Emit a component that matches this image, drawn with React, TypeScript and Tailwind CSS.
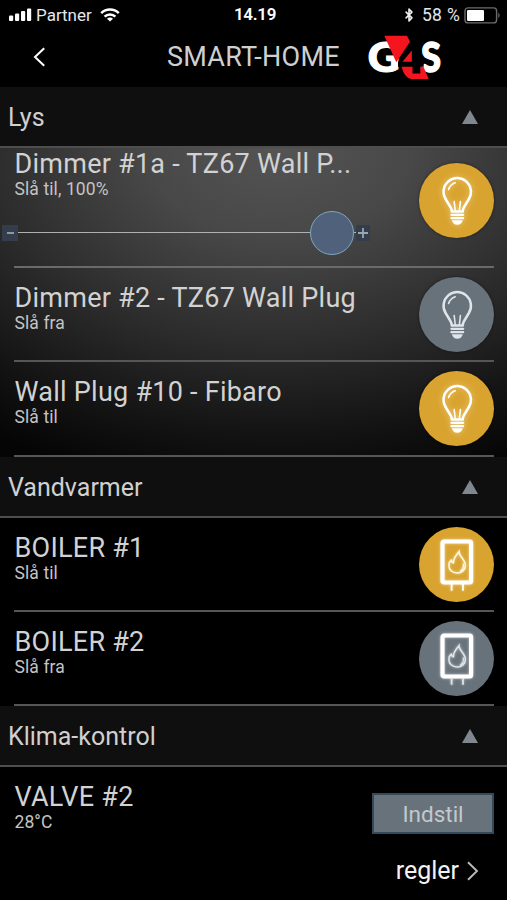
import { Bluetooth } from 'lucide-react';
import clsx from 'clsx';
import type { ReactNode } from 'react';

interface DeviceRowProps {
  name: string;
  status: string;
  className?: string;
  children?: ReactNode;
}

const StatusBar = () => (
  <div className="flex h-[30px] items-center px-[8px] text-[17px] text-gray-200">
    <div className="flex flex-1 items-center">
      <svg width="24" height="14" viewBox="0 0 24 14" fill="#fff">
        <rect x="1" y="7.5" width="4.2" height="5.5" rx="1" />
        <rect x="7" y="5.5" width="4.2" height="7.5" rx="1" />
        <rect x="13" y="3" width="4.2" height="10" rx="1" />
        <rect x="19" y="0.5" width="4.2" height="12.5" rx="1" />
      </svg>
      <span className="ml-[4px] pt-[1px]">Partner</span>
      <svg className="ml-[8px]" width="20" height="14" viewBox="0 0 20 14" fill="none" stroke="#fff" strokeWidth="2.5">
        <path d="M1.2 5.2a12.4 12.4 0 0 1 17.6 0" />
        <path d="M4.6 8.7a7.6 7.6 0 0 1 10.8 0" />
        <path d="M10 13.6 7 10.8a4.2 4.2 0 0 1 6 0z" fill="#fff" stroke="none" />
      </svg>
    </div>
    <span className="pl-[3px] font-semibold tracking-[-0.3px] text-white">14.19</span>
    <div className="flex flex-1 items-center justify-end">
      <Bluetooth className="h-[18px] w-[14px]" strokeWidth={2.8} color="#eee" />
      <span className="ml-[6px] pt-[1px] text-[17.5px] tracking-[0.3px]">58 %</span>
      <svg className="-mr-[3px] ml-[4px]" width="38" height="17" viewBox="0 0 38 17">
        <rect x="1" y="0.9" width="31.6" height="15" rx="3" fill="none" stroke="#6c6c6c" strokeWidth="1.4" />
        <rect x="3" y="2.9" width="17" height="11" rx="1.2" fill="#fff" />
        <path d="M34.4 5.6q2.4 2.8 0 5.6z" fill="#777" />
      </svg>
    </div>
  </div>
);

const Logo = () => (
  <svg
    className="overflow-visible"
    width="76"
    height="46"
    viewBox="0 0 76 46"
    fontFamily="Lato, sans-serif"
    fontWeight="900"
  >
    <text x="2.8" y="37.4" fontSize="41" fill="#fff" stroke="#fff" strokeWidth="1.2" textLength="32" lengthAdjust="spacingAndGlyphs">
      G
    </text>
    <text x="56" y="37.4" fontSize="41" fill="#fff" stroke="#fff" strokeWidth="1.4" textLength="20" lengthAdjust="spacingAndGlyphs">
      S
    </text>
    {/* dark gap between the white letters, then the red band around it */}
    <path d="M33 31.7V27L47.5 6.7H55.3V26.7H58.7V31.7Z" fill="#000" />
    <path d="M19.3 0.7H42L45 6.7L31.3 27.3Z" fill="#f5151f" />
    <path d="M46.8 15.5V26.7H37.5Z" fill="#f5151f" />
    <path d="M36.5 31.7H47.5V38.5H55.3V31.7H58.5L63.7 44H46Q39.5 43 36.5 31.7Z" fill="#f5151f" />
  </svg>
);

const Bulb = ({ on }: { on: boolean }) => (
  <svg
    className={clsx('h-[50px] w-[34px]', on && 'drop-shadow-[0_0_3px_rgba(255,240,190,0.6)]')}
    viewBox="0 0 34 50"
    fill="none"
    stroke={on ? '#fff' : '#dfe4e8'}
    strokeWidth="2.5"
    strokeLinecap="round"
    strokeLinejoin="round"
  >
    <path d="M11.7 35.4Q11.7 33 10.4 31L5.6 23A13.7 13.7 0 1 1 28.9 23L24.1 31Q22.8 33 22.8 35.4Z" />
    <path d="M8.6 13.4q1.8-5 6.6-6.6" strokeWidth="1.6" />
    <path d="M14.2 25.5 15.2 34.5M20.4 25.5 19.4 34.5" strokeWidth="1.6" />
    <path d="M11.4 38.8h11.8M11.4 42.2h11.8" strokeWidth="2.2" />
    <path d="M11.8 44.2h11q-1.4 4.6-5.5 4.6t-5.5-4.6z" fill="currentColor" stroke="none" className={on ? 'text-white' : 'text-[#dfe4e8]'} />
  </svg>
);

const Boiler = ({ on }: { on: boolean }) => (
  <svg
    className="h-[54px] w-[36px] drop-shadow-[0_0_1.5px_rgba(255,255,255,0.6)]"
    viewBox="0 0 36 54"
    fill="none"
    stroke="#fff"
  >
    <rect x="3.5" y="3.5" width="28.6" height="41" rx="1.5" strokeWidth="4.2" />
    <path d="M12.6 46v6.7M24 46v6.7" strokeWidth="1.8" stroke={on ? '#fff' : '#dfe4e8'} />
    <path
      d="M20 13.6C19.8 18.3 26.4 21.3 26.4 27.4C26.4 32 22.8 35 18.2 35C13.2 35 9.7 31.7 9.9 27.2C10 24.9 10.9 23.1 12.2 22.2C12.6 23.7 13.3 24.5 14.4 24.7C14.4 19.9 17.2 17.4 20 13.6Z"
      strokeWidth="1.6"
      stroke={on ? '#fff8e0' : '#dfe4e8'}
    />
    <path d="M24.2 25.5q1 5.4-3 7.8" strokeWidth="1.3" stroke={on ? '#fff8e0' : '#dfe4e8'} />
  </svg>
);

const DeviceButton = ({ on, children }: { on: boolean; children: ReactNode }) => (
  <button
    className={clsx(
      'flex h-[75px] w-[75px] shrink-0 items-center justify-center rounded-full shadow-[0_0_3px_rgba(0,0,0,0.5)]',
      on ? 'bg-[#d9a32f]' : 'bg-[#68727b]'
    )}
  >
    {children}
  </button>
);

const SectionHeader = ({ title }: { title: string }) => (
  <div className="flex h-[61px] items-center justify-between border-b-2 border-[#4e4e4e] bg-[#0f0f0f] pr-[29px] pl-[8px]">
    <h2 className="pt-[2px] text-[25px] leading-[30px] text-[#d0d0d0]">{title}</h2>
    <svg className="mt-[1px]" width="16" height="14" viewBox="0 0 16 14">
      <path d="M8 0 16 14H0z" fill="#80878e" />
    </svg>
  </div>
);

const DeviceLabel = ({ name, status }: { name: string; status: string }) => (
  <>
    <h3 className="text-[27px] leading-[32px] tracking-[0.25px] whitespace-nowrap text-[#d2d2d2]">{name}</h3>
    <p className="-mt-px text-[17.5px] leading-[20px] tracking-[0.1px] text-[#c4c4c4]">{status}</p>
  </>
);

const DeviceRow = ({ name, status, className, children }: DeviceRowProps) => (
  <div
    className={clsx(
      'mr-[13px] ml-[14px] flex justify-between border-b-2 border-[#565656] pt-[9px] pl-[0.5px]',
      className ?? 'h-[94px]'
    )}
  >
    <div className="pt-[5px]">
      <DeviceLabel name={name} status={status} />
    </div>
    {children}
  </div>
);

const DimmerSlider = () => (
  <div className="-ml-[12.5px] flex h-[44px] w-[368px] items-center">
    <span className="flex h-[16px] w-[16px] items-center justify-center bg-[#333d4c]">
      <span className="h-[2px] w-[7px] bg-[#8b97a5]" />
    </span>
    <span className="h-[1.5px] flex-1 bg-[#b0b0b0]" />
    <span className="h-[44px] w-[44px] rounded-full border-[1.5px] border-[#7fa6bb] bg-[#50627b]" />
    <span className="h-[1.5px] w-[2px] bg-[#b0b0b0]" />
    <span className="flex h-[16px] w-[14px] items-center justify-center bg-[#333d4c]">
      <svg width="10" height="10" viewBox="0 0 10 10" stroke="#9aa5b1" strokeWidth="1.8">
        <path d="M5 0v10M0 5h10" />
      </svg>
    </span>
  </div>
);

export default function App() {
  return (
    <main className="h-[900px] w-[507px] overflow-hidden bg-black font-[Roboto,sans-serif]">
      <StatusBar />
      <header className="flex h-[57px] items-center pb-[3px]">
        <svg className="ml-[33px]" width="13" height="20" viewBox="0 0 13 20" fill="none" stroke="#fff" strokeWidth="2">
          <path d="M11.2 1.2 2 10l9.2 8.8" />
        </svg>
        <h1 className="ml-[121px] text-[27px] leading-[32px] tracking-[0.25px] text-[#cfcfcf]">SMART-HOME</h1>
        <div className="ml-[25px] pt-[2px]">
          <Logo />
        </div>
      </header>

      <SectionHeader title="Lys" />
      <div className="bg-[radial-gradient(ellipse_510px_345px_at_55%_0%,#545454_0%,#484848_26%,#2c2c2c_57%,#141414_82%,#050505_100%)]">
        {/* first row is scrolled partly under its header */}
        <div className="mr-[13px] ml-[14px] flex h-[120px] justify-between border-b-2 border-[#6a6a6a] pl-[0.5px]">
          <div>
            <DeviceLabel name="Dimmer #1a - TZ67 Wall P..." status="Slå til, 100%" />
            <div className="mt-[11.5px]">
              <DimmerSlider />
            </div>
          </div>
          <div className="pt-[15px]">
            <DeviceButton on>
              <Bulb on />
            </DeviceButton>
          </div>
        </div>
        <DeviceRow name="Dimmer #2 - TZ67 Wall Plug" status="Slå fra">
          <DeviceButton on={false}>
            <Bulb on={false} />
          </DeviceButton>
        </DeviceRow>
        <DeviceRow name="Wall Plug #10 - Fibaro" status="Slå til" className="h-[95px]">
          <DeviceButton on>
            <Bulb on />
          </DeviceButton>
        </DeviceRow>
      </div>

      <SectionHeader title="Vandvarmer" />
      <DeviceRow name="BOILER #1" status="Slå til">
        <DeviceButton on>
          <Boiler on />
        </DeviceButton>
      </DeviceRow>
      <DeviceRow name="BOILER #2" status="Slå fra">
        <DeviceButton on={false}>
          <Boiler on={false} />
        </DeviceButton>
      </DeviceRow>

      <SectionHeader title="Klima-kontrol" />
      <div className="mr-[13px] ml-[14px] flex h-[82px] justify-between pt-[14px] pl-[0.5px]">
        <div>
          <DeviceLabel name="VALVE #2" status="28°C" />
        </div>
        <button className="mt-[12px] h-[41px] w-[122px] border-2 border-[#34495a] bg-[#68727b] pt-[2px] text-[22.5px] leading-none text-[#c3c8cc]">
          Indstil
        </button>
      </div>
      <div className="flex items-center justify-end pt-[6px] pr-[28px]">
        <span className="text-[25px] leading-[32px] text-[#f2f2f2]">regler</span>
        <svg className="ml-[7px]" width="13" height="20" viewBox="0 0 13 20" fill="none" stroke="#bbb" strokeWidth="1.9">
          <path d="M2 1.2 11 10l-9 8.8" />
        </svg>
      </div>
    </main>
  );
}
